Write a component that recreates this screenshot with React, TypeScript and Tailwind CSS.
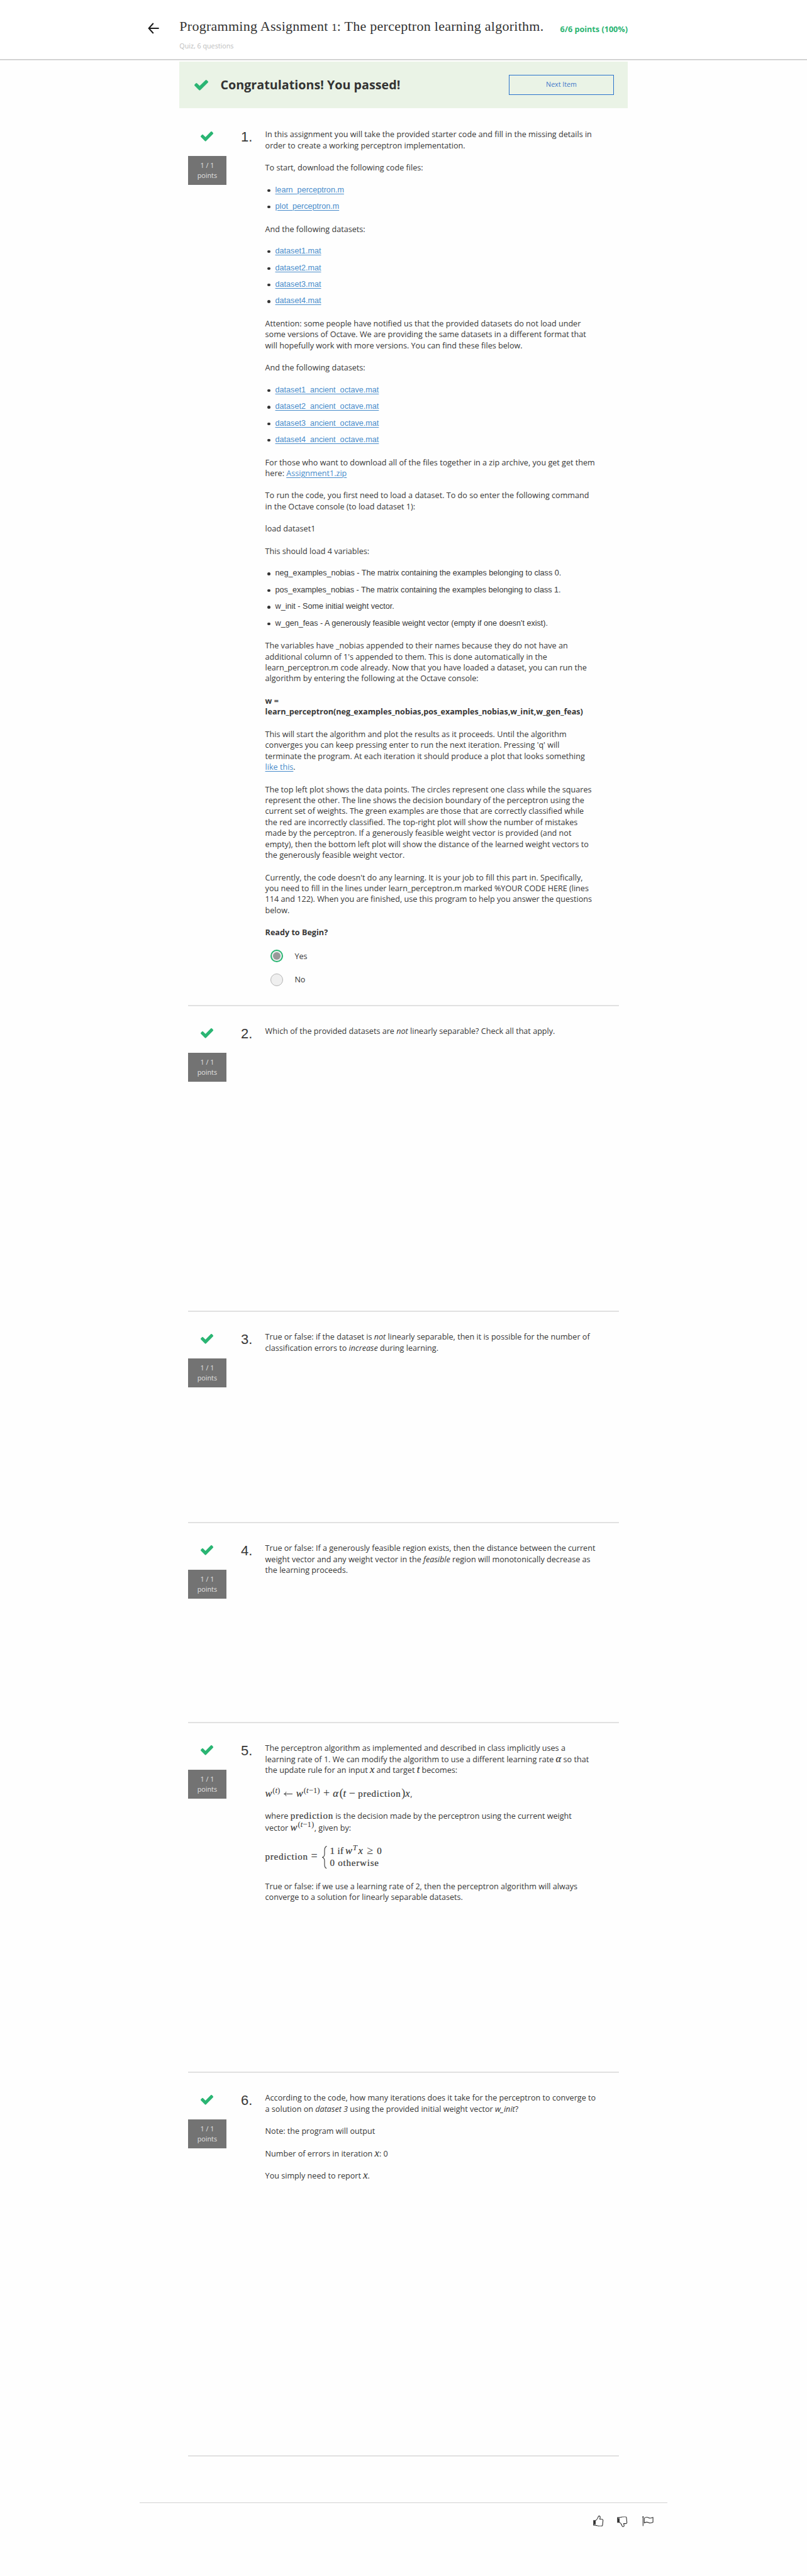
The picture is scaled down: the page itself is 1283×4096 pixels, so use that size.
import React from 'react';

type Box = { children?: React.ReactNode; className?: string };

const Check = ({ className }: { className: string }) => (
  <svg viewBox="121 334 1550 1188" preserveAspectRatio="none" fill="#2ab573" className={className}>
    <path d="M1671 566q0 40-28 68l-724 724-136 136q-28 28-68 28t-68-28l-136-136-362-362q-28-28-28-68t28-68l136-136q28-28 68-28t68 28l294 295 656-657q28-28 68-28t68 28l136 136q28 28 28 68z" />
  </svg>
);

const P = ({ children, className = '' }: Box) => <p className={`mb-[18.1px] whitespace-nowrap ${className}`}>{children}</p>;

const Link = ({ children }: Box) => (
  <a className="text-[#488ccb] underline decoration-[1px] underline-offset-[1.5px]">{children}</a>
);

const List = ({ items, links = false }: { items: string[]; links?: boolean }) => (
  <ul className="mb-[18.1px] flex flex-col gap-[9.06px] font-['Liberation_Sans',Arial,sans-serif] text-[12.61px]">
    {items.map((t) => (
      <li key={t} className="flex items-center whitespace-nowrap">
        <span className="ml-[3.6px] mr-[8px] mt-[1px] h-[4.4px] w-[4.4px] rounded-full bg-[#333]" />
        {links ? <Link>{t}</Link> : t}
      </li>
    ))}
  </ul>
);

/* Math pieces: variables, roman text, operators and superscripts */
const V = ({ children }: Box) => (
  <span className="font-['Liberation_Serif',serif] text-[16.5px] italic leading-[0] [-webkit-text-stroke:0.2px]">{children}</span>
);
const R = ({ children, className = 'tracking-[0.74px]' }: Box) => (
  <span className={`font-['Liberation_Serif',serif] text-[15px] leading-[0] [-webkit-text-stroke:0.2px] ${className}`}>{children}</span>
);
const Op = ({ children }: Box) => <span className="font-['Liberation_Serif',serif] text-[18px] leading-[0]">{children}</span>;
const Sup = ({ children, className = '' }: Box) => (
  <span className={`align-[6px] font-['Liberation_Serif',serif] text-[12.8px] leading-[0] ${className}`}>{children}</span>
);

const Question = ({ n, className, children }: { n: number; className: string; children: React.ReactNode }) => (
  <section className={`flex border-t-2 ${n > 1 ? 'border-[#e1e1e1]' : 'border-transparent'} ${className}`}>
    <div className="w-[61px] shrink-0">
      <Check className="ml-[20.5px] mt-[35.2px] h-[15.7px] w-[20.1px]" />
      <div className="mt-[23px] h-[46px] bg-[#737373] pt-[6.7px] text-center text-[10.76px] leading-4 text-[#e0e0e0]">
        <div>1 / 1</div>
        <div>points</div>
      </div>
    </div>
    <div className="ml-[23.1px] w-[38.6px] shrink-0 pt-[33.3px] font-['Liberation_Sans',Arial,sans-serif] text-[22px] leading-[22px]">{n}.</div>
    <div className="pt-[31.2px]">{children}</div>
  </section>
);

const Radio = ({ label, on = false }: { label: string; on?: boolean }) => (
  <div className="flex h-5 items-center gap-[18px] pl-[8.8px]">
    <span className={`flex h-5 w-5 items-center justify-center rounded-full bg-[#efefef] ${on ? 'border-2 border-[#2ab573]' : 'border border-[#b4b4b4]'}`}>
      {on && <span className="h-3 w-3 rounded-full bg-[#999]" />}
    </span>
    {label}
  </div>
);

const Thumb = ({ className = '' }: { className?: string }) => (
  <svg viewBox="0 0 74 78" className={`h-[17.4px] w-[16.5px] ${className}`} fill="none" stroke="#333" strokeWidth="5" strokeLinejoin="round">
    <path fillRule="evenodd" fill="#333" stroke="none" d="M1 32H18V71H1Z M10 61V66H15V61Z" />
    <path d="M18 35C28 28 34 20 36 9C38 1 47 1 50 8C51 15 49 20 47 26L64 26C70 27 71 32 70 38L67 68C66 73 62 75 57 75C42 75 32 74 27 70H18" />
  </svg>
);

const Flag = () => (
  <svg viewBox="0 0 80 72" className="h-4 w-[17.8px]" fill="none" stroke="#333" strokeWidth="5" strokeLinejoin="round">
    <path d="M6 4V70" />
    <circle cx="6" cy="5" r="5" fill="#333" stroke="none" />
    <path d="M15 14C26 4 38 6 47 11C58 17 66 12 77 8V43C66 47 58 52 47 46C37 41 27 40 15 48Z" />
  </svg>
);

export default function App() {
  return (
    <div className="h-[4096px] w-[1283px] overflow-hidden bg-[#fefefe] font-['Open_Sans',sans-serif] text-[12.62px] leading-[17.4px] text-[#373737]">
      <header className="flex h-[95px] border-b border-[#c6c6c6] bg-white pl-[235px] shadow-[0_1px_1px_rgba(0,0,0,0.1)]">
        <svg viewBox="0 0 18 18" className="mt-[35.5px] h-[18px] w-[18px]" fill="none" stroke="#1c1c1c" strokeWidth="2">
          <path d="M8.8 1L1.6 9L8.8 17M1.6 9H17.6" />
        </svg>
        <div className="ml-[32.3px] w-[605.2px] pt-[29px]">
          <h1 className="whitespace-nowrap font-['Liberation_Serif',serif] text-[22px] leading-[25px] tracking-[0.27px] text-[#333]">
            Programming Assignment <span className="text-[16px] [-webkit-text-stroke:0.2px]">1</span>: The perceptron learning algorithm.
          </h1>
          <div className="mt-[9px] text-[10.74px] leading-4 text-[#bdbdbd]">Quiz, 6 questions</div>
        </div>
        <div className="whitespace-nowrap pt-[38px] text-[12.63px] font-bold text-[#2ab573]">6/6 points (100%)</div>
      </header>

      <main>
        <div className="ml-[285.3px] mt-[2.5px] flex h-[74.5px] w-[712.4px] items-center bg-[#eaf3e6] pl-[23.4px] pr-[21.4px]">
          <Check className="mt-[2px] h-[16.7px] w-[22px]" />
          <h2 className="ml-[19.8px] whitespace-nowrap text-[19.73px] font-bold leading-[27px] text-[#333]">Congratulations! You passed!</h2>
          <button className="ml-auto h-8 w-[167.6px] border border-[#2a73cc] text-[10.66px] text-[#3f77c9]">Next Item</button>
        </div>

        <div className="ml-[298.9px] w-[685.2px]">
          <Question n={1} className="h-[1426px]">
            <P>In this assignment you will take the provided starter code and fill in the missing details in<br />order to create a working perceptron implementation.</P>
            <P>To start, download the following code files:</P>
            <List links items={['learn_perceptron.m', 'plot_perceptron.m']} />
            <P>And the following datasets:</P>
            <List links items={['dataset1.mat', 'dataset2.mat', 'dataset3.mat', 'dataset4.mat']} />
            <P>Attention: some people have notified us that the provided datasets do not load under<br />some versions of Octave. We are providing the same datasets in a different format that<br />will hopefully work with more versions. You can find these files below.</P>
            <P>And the following datasets:</P>
            <List links items={['dataset1_ancient_octave.mat', 'dataset2_ancient_octave.mat', 'dataset3_ancient_octave.mat', 'dataset4_ancient_octave.mat']} />
            <P>For those who want to download all of the files together in a zip archive, you get get them<br />here: <Link>Assignment1.zip</Link></P>
            <P>To run the code, you first need to load a dataset. To do so enter the following command<br />in the Octave console (to load dataset 1):</P>
            <P>load dataset1</P>
            <P>This should load 4 variables:</P>
            <List items={[
              'neg_examples_nobias - The matrix containing the examples belonging to class 0.',
              'pos_examples_nobias - The matrix containing the examples belonging to class 1.',
              'w_init - Some initial weight vector.',
              "w_gen_feas - A generously feasible weight vector (empty if one doesn't exist).",
            ]} />
            <P>The variables have _nobias appended to their names because they do not have an<br />additional column of 1's appended to them. This is done automatically in the<br />learn_perceptron.m code already. Now that you have loaded a dataset, you can run the<br />algorithm by entering the following at the Octave console:</P>
            <P className="font-bold">w =<br />learn_perceptron(neg_examples_nobias,pos_examples_nobias,w_init,w_gen_feas)</P>
            <P>This will start the algorithm and plot the results as it proceeds. Until the algorithm<br />converges you can keep pressing enter to run the next iteration. Pressing 'q' will<br />terminate the program. At each iteration it should produce a plot that looks something<br /><Link>like this</Link>.</P>
            <P>The top left plot shows the data points. The circles represent one class while the squares<br />represent the other. The line shows the decision boundary of the perceptron using the<br />current set of weights. The green examples are those that are correctly classified while<br />the red are incorrectly classified. The top-right plot will show the number of mistakes<br />made by the perceptron. If a generously feasible weight vector is provided (and not<br />empty), then the bottom left plot will show the distance of the learned weight vectors to<br />the generously feasible weight vector.</P>
            <P>Currently, the code doesn't do any learning. It is your job to fill this part in. Specifically,<br />you need to fill in the lines under learn_perceptron.m marked %YOUR CODE HERE (lines<br />114 and 122). When you are finished, use this program to help you answer the questions<br />below.</P>
            <P className="font-bold">Ready to Begin?</P>
            <div className="flex flex-col gap-[17.2px] pt-[0.6px]">
              <Radio label="Yes" on />
              <Radio label="No" />
            </div>
          </Question>

          <Question n={2} className="h-[486px]">
            <P>Which of the provided datasets are <em>not</em> linearly separable? Check all that apply.</P>
          </Question>

          <Question n={3} className="h-[336px]">
            <P>True or false: if the dataset is <em>not</em> linearly separable, then it is possible for the number of<br />classification errors to <em>increase</em> during learning.</P>
          </Question>

          <Question n={4} className="h-[318px]">
            <P>True or false: If a generously feasible region exists, then the distance between the current<br />weight vector and any weight vector in the <em>feasible</em> region will monotonically decrease as<br />the learning proceeds.</P>
          </Question>

          <Question n={5} className="h-[556px]">
            <P>The perceptron algorithm as implemented and described in class implicitly uses a<br />learning rate of 1. We can modify the algorithm to use a different learning rate <V>α</V> so that<br />the update rule for an input <V>x</V> and target <V>t</V> becomes:</P>
            <div className="mb-[18.1px] flex items-baseline whitespace-nowrap pt-[2.4px]">
              <span className="w-[11.6px]"><V>w</V></span>
              <span className="w-[18.1px]"><Sup>(<i>t</i>)</Sup></span>
              <svg viewBox="0 0 14 9" className="mr-[5.4px] h-[9px] w-[14px]" fill="none" stroke="#373737" strokeWidth="1">
                <path d="M14 4.5H0.8M4 1C3.4 3 2.4 4 0.6 4.5C2.4 5 3.4 6 4 8" />
              </svg>
              <span className="w-[12.2px]"><V>w</V></span>
              <span className="w-[31.2px]"><Sup>(<i>t</i>−1)</Sup></span>
              <span className="w-[15.1px]"><Op>+</Op></span>
              <span className="w-[10.7px]"><V>α</V></span>
              <span className="w-[5.6px]"><Op>(</Op></span>
              <span className="w-[9.4px]"><V>t</V></span>
              <span className="w-[14.4px]"><Op>−</Op></span>
              <span className="w-[69.1px]"><R>prediction</R></span>
              <span className="w-[5.9px]"><Op>)</Op></span>
              <span className="w-[8.1px]"><V>x</V></span>
              <span>,</span>
            </div>
            <p className="whitespace-nowrap leading-[18.7px]">
              where <R>prediction</R> is the decision made by the perceptron using the current weight<br />
              vector <V>w</V><Sup className="ml-[1px] mr-[0.5px]">(<i>t</i>−1)</Sup>, given by:
            </p>
            <div className="mb-[19.3px] mt-[18px] flex h-[36.7px] items-center whitespace-nowrap">
              <span className="w-[72.8px]"><R>prediction</R></span>
              <span className="w-[18px]"><Op>=</Op></span>
              <svg viewBox="0 0 8 37" className="mr-[4px] h-[36.7px] w-[8px]" fill="none" stroke="#373737" strokeWidth="1.1">
                <path d="M7.5 0.5C4.2 2 4 4 4 7V13C4 16 3.5 17.5 0.5 18.5C3.5 19.5 4 21 4 24V30C4 33 4.2 35 7.5 36.5" />
              </svg>
              <div className="flex flex-col">
                <div className="flex h-[19px] items-baseline">
                  <span className="w-[24.7px]"><R className="tracking-[0.4px]">1 if</R></span>
                  <span className="w-[11.6px]"><V>w</V></span>
                  <span className="w-[8.9px]"><Sup><i>T</i></Sup></span>
                  <span className="w-[13.8px]"><V>x</V></span>
                  <span className="w-[15.8px]"><Op>≥</Op></span>
                  <R>0</R>
                </div>
                <div className="h-[17.4px]"><R className="tracking-[0.8px]">0 otherwise</R></div>
              </div>
            </div>
            <P>True or false: if we use a learning rate of 2, then the perceptron algorithm will always<br />converge to a solution for linearly separable datasets.</P>
          </Question>

          <Question n={6} className="h-[610px]">
            <P>According to the code, how many iterations does it take for the perceptron to converge to<br />a solution on <em>dataset 3</em> using the provided initial weight vector <em>w_init</em>?</P>
            <P>Note: the program will output</P>
            <P>Number of errors in iteration <V>x</V>: 0</P>
            <P>You simply need to report <V>x</V>.</P>
          </Question>
          <div className="h-[2px] bg-[#e1e1e1]" />
        </div>
      </main>

      <footer className="ml-[222px] mt-[72.5px] flex w-[839px] items-start justify-end border-t border-[#d3d3d3] pr-[22.5px] pt-[20px]">
        <Thumb />
        <Thumb className="ml-[21.5px] mt-[1px] -scale-y-100" />
        <span className="ml-[23px] mt-[1.2px]"><Flag /></span>
      </footer>
    </div>
  );
}
